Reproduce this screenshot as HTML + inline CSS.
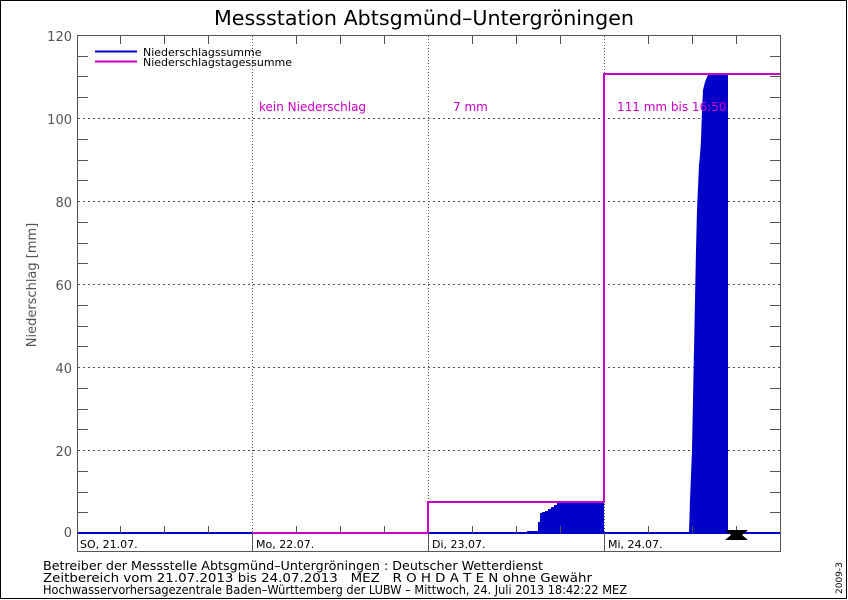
<!DOCTYPE html>
<html><head><meta charset="utf-8"><style>
html,body{margin:0;padding:0;background:#fff}
svg{display:block}
text{font-family:"DejaVu Sans","Liberation Sans",sans-serif}
</style></head><body>
<svg width="848" height="600" viewBox="0 0 848 600" xmlns="http://www.w3.org/2000/svg">
<rect x="0.5" y="0.5" width="846" height="598" fill="#fff" stroke="#000" stroke-width="1"/>
<text x="424" y="25" font-size="20" text-anchor="middle" fill="#000" textLength="420" lengthAdjust="spacingAndGlyphs">Messstation Abtsgmünd–Untergröningen</text>
<g stroke="#555" stroke-width="1" stroke-dasharray="2,3">
<line x1="78" y1="118.5" x2="780" y2="118.5"/>
<line x1="78" y1="201.5" x2="780" y2="201.5"/>
<line x1="78" y1="284.5" x2="780" y2="284.5"/>
<line x1="78" y1="367.5" x2="780" y2="367.5"/>
<line x1="78" y1="450.5" x2="780" y2="450.5"/>
</g>
<g stroke="#555" stroke-width="1" stroke-dasharray="1,2">
<line x1="252.5" y1="36" x2="252.5" y2="533"/>
<line x1="428.5" y1="36" x2="428.5" y2="533"/>
<line x1="604.5" y1="36" x2="604.5" y2="533"/>
</g>
<path d="M527 533 L527 531 L538 531 L538 522 L540 522 L540 513 L542 513 L542 512 L545 512 L545 511 L548 511 L548 509 L551 509 L551 507 L554 507 L554 505 L557 505 L557 502 L604 502 L604 533 Z" fill="#0000c8"/>
<path d="M689 533 L690 500 L692 450 L694 350 L696 250 L697 210 L699 165 L700 155 L701 140 L702 110 L703 90 L705 82 L707 77 L708 75 L728 75 L728 533 Z" fill="#0000c8"/>
<line x1="78" y1="533" x2="780" y2="533" stroke="#0000c8" stroke-width="2"/>
<path d="M252 533 L428 533 L428 502 L604 502 L604 74 L780 74" fill="none" stroke="#c800c8" stroke-width="2"/>
<g stroke="#555" stroke-width="1" fill="none">
<line x1="77.5" y1="35" x2="77.5" y2="552"/>
<line x1="77" y1="35.5" x2="780" y2="35.5"/>
<line x1="780.5" y1="35" x2="780.5" y2="552"/>
<line x1="77" y1="551.5" x2="781" y2="551.5"/>
<line x1="252.5" y1="533" x2="252.5" y2="552"/>
<line x1="428.5" y1="533" x2="428.5" y2="552"/>
<line x1="604.5" y1="533" x2="604.5" y2="552"/>
</g>
<g stroke="#555" stroke-width="1">
<path d="M78 56.5h10M78 76.5h10M78 97.5h10M78 139.5h10M78 160.5h10M78 180.5h10M78 222.5h10M78 243.5h10M78 263.5h10M78 305.5h10M78 326.5h10M78 346.5h10M78 388.5h10M78 409.5h10M78 429.5h10M78 471.5h10M78 492.5h10M78 512.5h10"/>
<path d="M770 56.5h10M770 76.5h10M770 97.5h10M770 139.5h10M770 160.5h10M770 180.5h10M770 222.5h10M770 243.5h10M770 263.5h10M770 305.5h10M770 326.5h10M770 346.5h10M770 388.5h10M770 409.5h10M770 429.5h10M770 471.5h10M770 492.5h10M770 512.5h10"/>
<path d="M120.5 36v8M164.5 36v8M208.5 36v8M296.5 36v8M340.5 36v8M384.5 36v8M472.5 36v8M516.5 36v8M560.5 36v8M648.5 36v8M692.5 36v8M736.5 36v8"/>
<path d="M120.5 526v7M164.5 526v7M208.5 526v7M296.5 526v7M340.5 526v7M384.5 526v7M472.5 526v7M516.5 526v7M560.5 526v7M648.5 526v7M692.5 526v7M736.5 526v7"/>
</g>
<path d="M725 530 L748 530 L742 535 L748 540 L725 540 L731 535 Z" fill="#000"/>
<g font-size="13" fill="#555" text-anchor="end">
<text x="72" y="41">120</text>
<text x="72" y="124">100</text>
<text x="72" y="207">80</text>
<text x="72" y="290">60</text>
<text x="72" y="373">40</text>
<text x="72" y="456">20</text>
<text x="72" y="537">0</text>
</g>
<text transform="translate(36 285) rotate(-90)" font-size="13" fill="#555" text-anchor="middle">Niederschlag [mm]</text>
<line x1="95" y1="51.5" x2="137" y2="51.5" stroke="#0000c8" stroke-width="2"/>
<line x1="95" y1="61.5" x2="137" y2="61.5" stroke="#c800c8" stroke-width="2"/>
<g font-size="11" fill="#000">
<text x="143" y="56">Niederschlagssumme</text>
<text x="143" y="66">Niederschlagstagessumme</text>
</g>
<g font-size="12" fill="#c800c8">
<text x="259" y="111">kein Niederschlag</text>
<text x="453" y="111">7 mm</text>
<text x="617" y="111">111 mm bis 16:50</text>
</g>
<g font-size="11" fill="#000">
<text x="80" y="548">SO, 21.07.</text>
<text x="256" y="548">Mo, 22.07.</text>
<text x="432" y="548">Di, 23.07.</text>
<text x="608" y="548">Mi, 24.07.</text>
</g>
<g font-size="12" fill="#000">
<text x="43" y="570" textLength="500" lengthAdjust="spacingAndGlyphs">Betreiber der Messstelle Abtsgmünd–Untergröningen : Deutscher Wetterdienst</text>
<text x="43" y="582" xml:space="preserve" textLength="549" lengthAdjust="spacingAndGlyphs">Zeitbereich vom 21.07.2013 bis 24.07.2013   MEZ   R O H D A T E N ohne Gewähr</text>
<text x="43" y="594" textLength="584" lengthAdjust="spacingAndGlyphs">Hochwasservorhersagezentrale Baden–Württemberg der LUBW – Mittwoch, 24. Juli 2013 18:42:22 MEZ</text>
</g>
<text transform="translate(842 594) rotate(-90)" font-size="9" fill="#000">2009-3</text>
</svg>
</body></html>
